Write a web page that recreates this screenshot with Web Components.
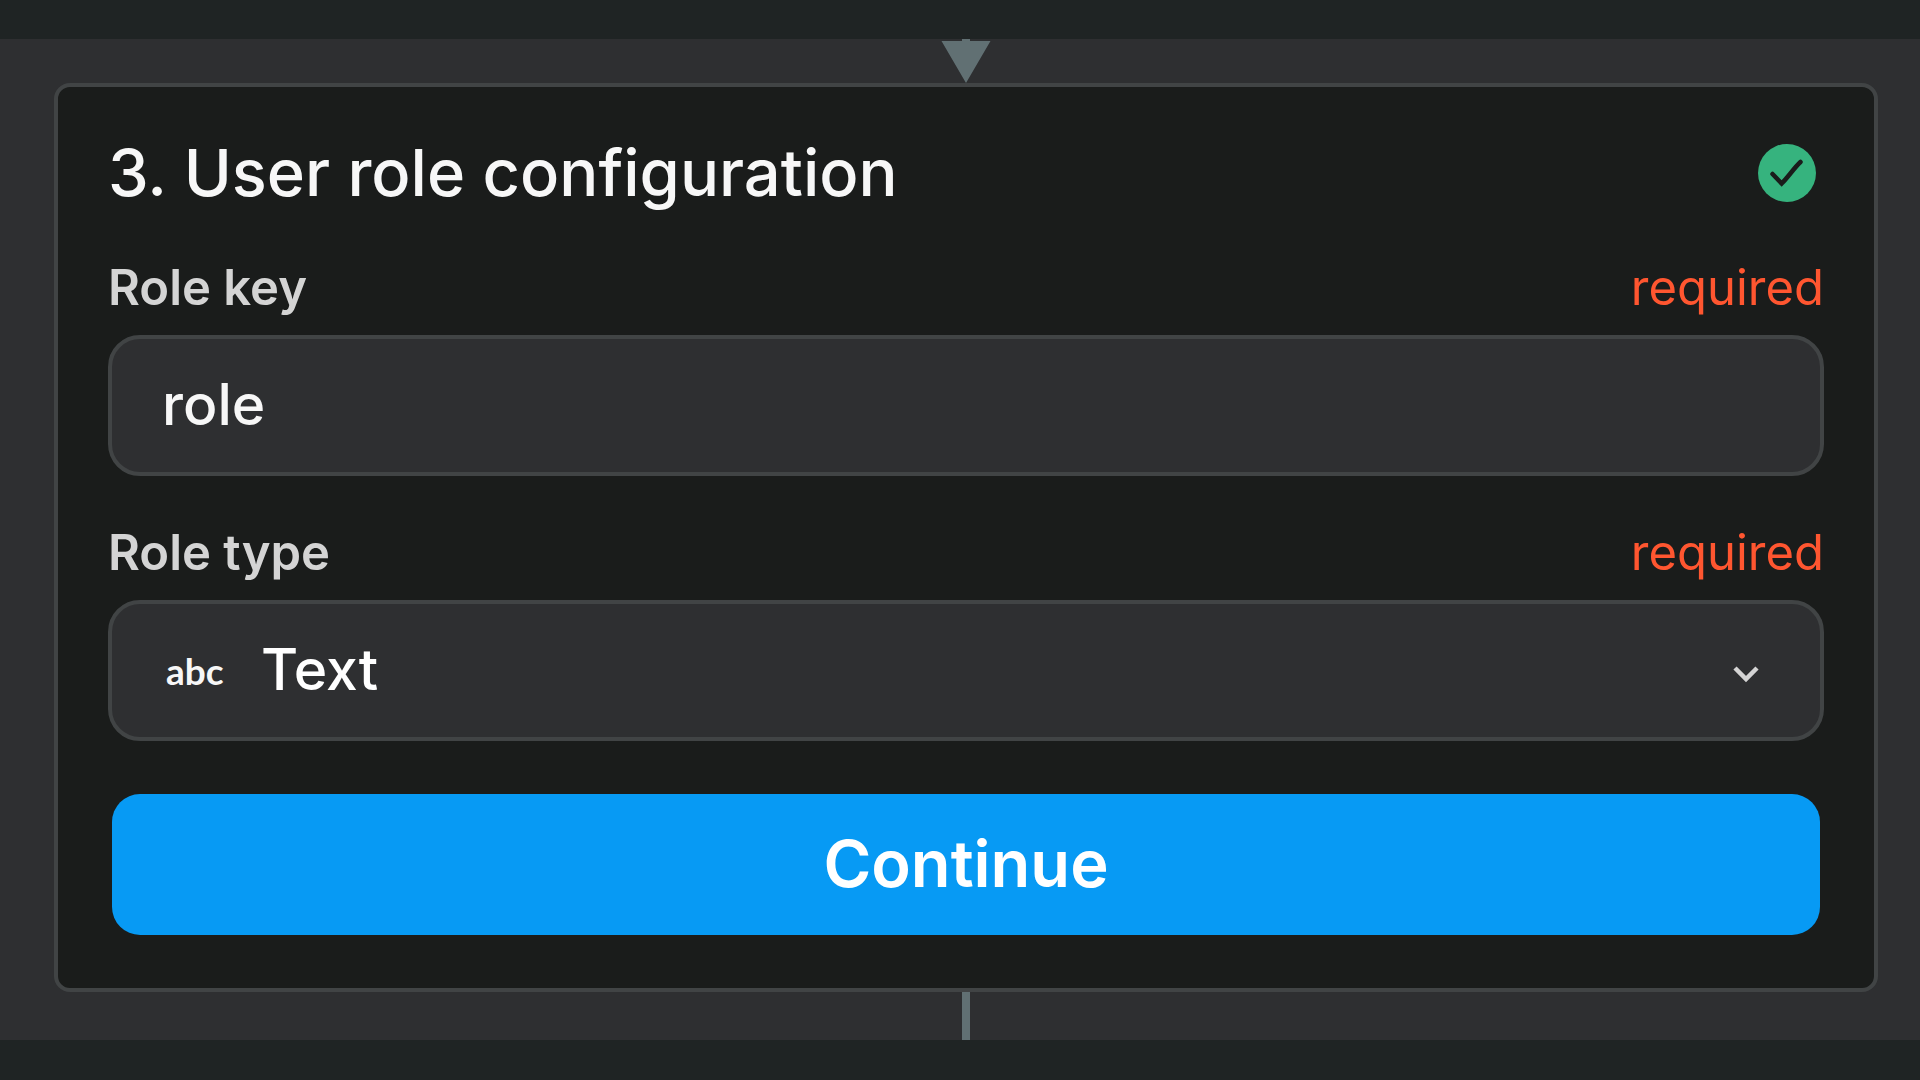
<!DOCTYPE html>
<html lang="en">
    <head>
        <meta charset="utf-8">
        <title>User role configuration</title>
        <style>
            body {
                margin: 0;
                background: #1f2424;
                color: #f7f7f7;
                font-family: Inter, "Liberation Sans", sans-serif;
            }
        </style>
    </head>
    <body>
        <flow-canvas>
            <flow-step heading="3. User role configuration">
                <text-field label="Role key" value="role"></text-field>
                <type-field label="Role type"></type-field>
                <action-button>Continue</action-button>
            </flow-step>
        </flow-canvas>

        <script>
            customElements.define('flow-canvas', class extends HTMLElement {
                constructor() {
                    super();

                    const root = this.attachShadow({ mode: 'open' });
                    root.innerHTML = `
                        <style>
                            :host {
                                display: flex;
                                flex-direction: column;
                                margin: 39px 0 40px;
                                padding: 0 42px 0 54px;
                                background: #2e2f31;
                            }
                            svg {
                                display: block;
                                align-self: center;
                                fill: #617073;
                            }
                        </style>
                        <svg width="50" height="44" viewBox="0 0 50 44" aria-hidden="true">
                            <path d="M21 0h8v2h20.500L25 44 .5 2H21z"/>
                        </svg>
                        <slot></slot>
                        <svg width="8" height="48" viewBox="0 0 8 48" aria-hidden="true">
                            <path d="M0 0h8v48H0z"/>
                        </svg>
                    `;
                }
            });

            customElements.define('flow-step', class extends HTMLElement {
                constructor() {
                    super();

                    const root = this.attachShadow({ mode: 'open' });
                    root.innerHTML = `
                        <style>
                            :host {
                                display: flex;
                                flex-direction: column;
                                gap: 44px;
                                padding: 44px 50px;
                                border: 4px solid #414445;
                                border-radius: 16px;
                                background: #1a1c1b;
                            }
                            header {
                                display: flex;
                                align-items: center;
                                justify-content: space-between;
                                padding: 4px 8px 0 0;
                            }
                            h2 {
                                margin: 0;
                                font-size: 65px;
                                font-weight: 500;
                                line-height: 76px;
                            }
                        </style>
                        <header>
                            <h2></h2>
                            <svg width="58" height="58" viewBox="0 0 58 58" role="img" aria-label="Complete">
                                <circle cx="29" cy="29" r="29" fill="#36b37e"/>
                                <path d="M14.500 30 23.700 39.500C31 32 36 24 42.500 18" fill="none" stroke="#1a1c1b" stroke-width="4.500" stroke-linecap="round"/>
                            </svg>
                        </header>
                        <slot></slot>
                    `;
                    root.querySelector('h2').textContent = this.getAttribute('heading');
                }
            });

            // shared by both kinds of field
            const fieldStyles = `
                :host {
                    display: flex;
                    flex-direction: column;
                    gap: 14px;
                }
                .caption {
                    display: flex;
                    justify-content: space-between;
                    font-size: 49px;
                    line-height: 66px;
                }
                label {
                    color: #d4d4d4;
                    font-weight: 600;
                }
                .required {
                    color: #ff5630;
                }
                input, select {
                    box-sizing: border-box;
                    width: 100%;
                    height: 141px;
                    margin: 0;
                    padding: 0 50px 2px;
                    border: 4px solid #414445;
                    border-radius: 32px;
                    outline: none;
                    background: #2e2f31;
                    color: inherit;
                    font: 500 57px Inter, "Liberation Sans", sans-serif;
                }
            `;

            customElements.define('text-field', class extends HTMLElement {
                constructor() {
                    super();

                    const root = this.attachShadow({ mode: 'open' });
                    root.innerHTML = `
                        <style>${fieldStyles}</style>
                        <div class="caption">
                            <label for="control"></label>
                            <span class="required">required</span>
                        </div>
                        <input id="control" type="text" required>
                    `;
                    root.querySelector('label').textContent = this.getAttribute('label');
                    root.querySelector('input').value = this.getAttribute('value');
                }
            });

            customElements.define('type-field', class extends HTMLElement {
                constructor() {
                    super();

                    const root = this.attachShadow({ mode: 'open' });
                    root.innerHTML = `
                        <style>
                            ${fieldStyles}
                            .box {
                                display: grid;
                                grid-template-columns: 54px 1fr auto;
                                align-items: center;
                            }
                            select {
                                grid-area: 1 / 1 / 2 / 4;
                                appearance: none;
                                padding-left: 149px;
                                color: #fff;
                            }
                            .kind, svg {
                                grid-row: 1;
                                pointer-events: none;
                            }
                            .kind {
                                grid-column: 1;
                                padding-left: 58px;
                                font: 700 37px "Liberation Sans Narrow", Lato, sans-serif;
                            }
                            svg {
                                grid-column: 3;
                                margin-right: 64px;
                            }
                        </style>
                        <div class="caption">
                            <label for="control"></label>
                            <span class="required">required</span>
                        </div>
                        <div class="box">
                            <select id="control" required>
                                <option>Text</option>
                            </select>
                            <span class="kind" aria-hidden="true">abc</span>
                            <svg width="28" height="24" viewBox="0 0 28 24" aria-hidden="true">
                                <path d="M3 9 14 20 25 9" fill="none" stroke="#d4d4d4" stroke-width="4.500"/>
                            </svg>
                        </div>
                    `;
                    root.querySelector('label').textContent = this.getAttribute('label');
                }
            });

            customElements.define('action-button', class extends HTMLElement {
                constructor() {
                    super();

                    const root = this.attachShadow({ mode: 'open' });
                    root.innerHTML = `
                        <style>
                            :host {
                                display: block;
                                padding: 9px 4px;
                            }
                            button {
                                display: block;
                                width: 100%;
                                height: 141px;
                                padding: 0 0 2px;
                                border: 0;
                                border-radius: 28px;
                                background: #079af4;
                                color: #fff;
                                font: 600 65px Inter, "Liberation Sans", sans-serif;
                            }
                        </style>
                        <button type="button"><slot></slot></button>
                    `;
                }
            });
        </script>
    </body>
</html>
